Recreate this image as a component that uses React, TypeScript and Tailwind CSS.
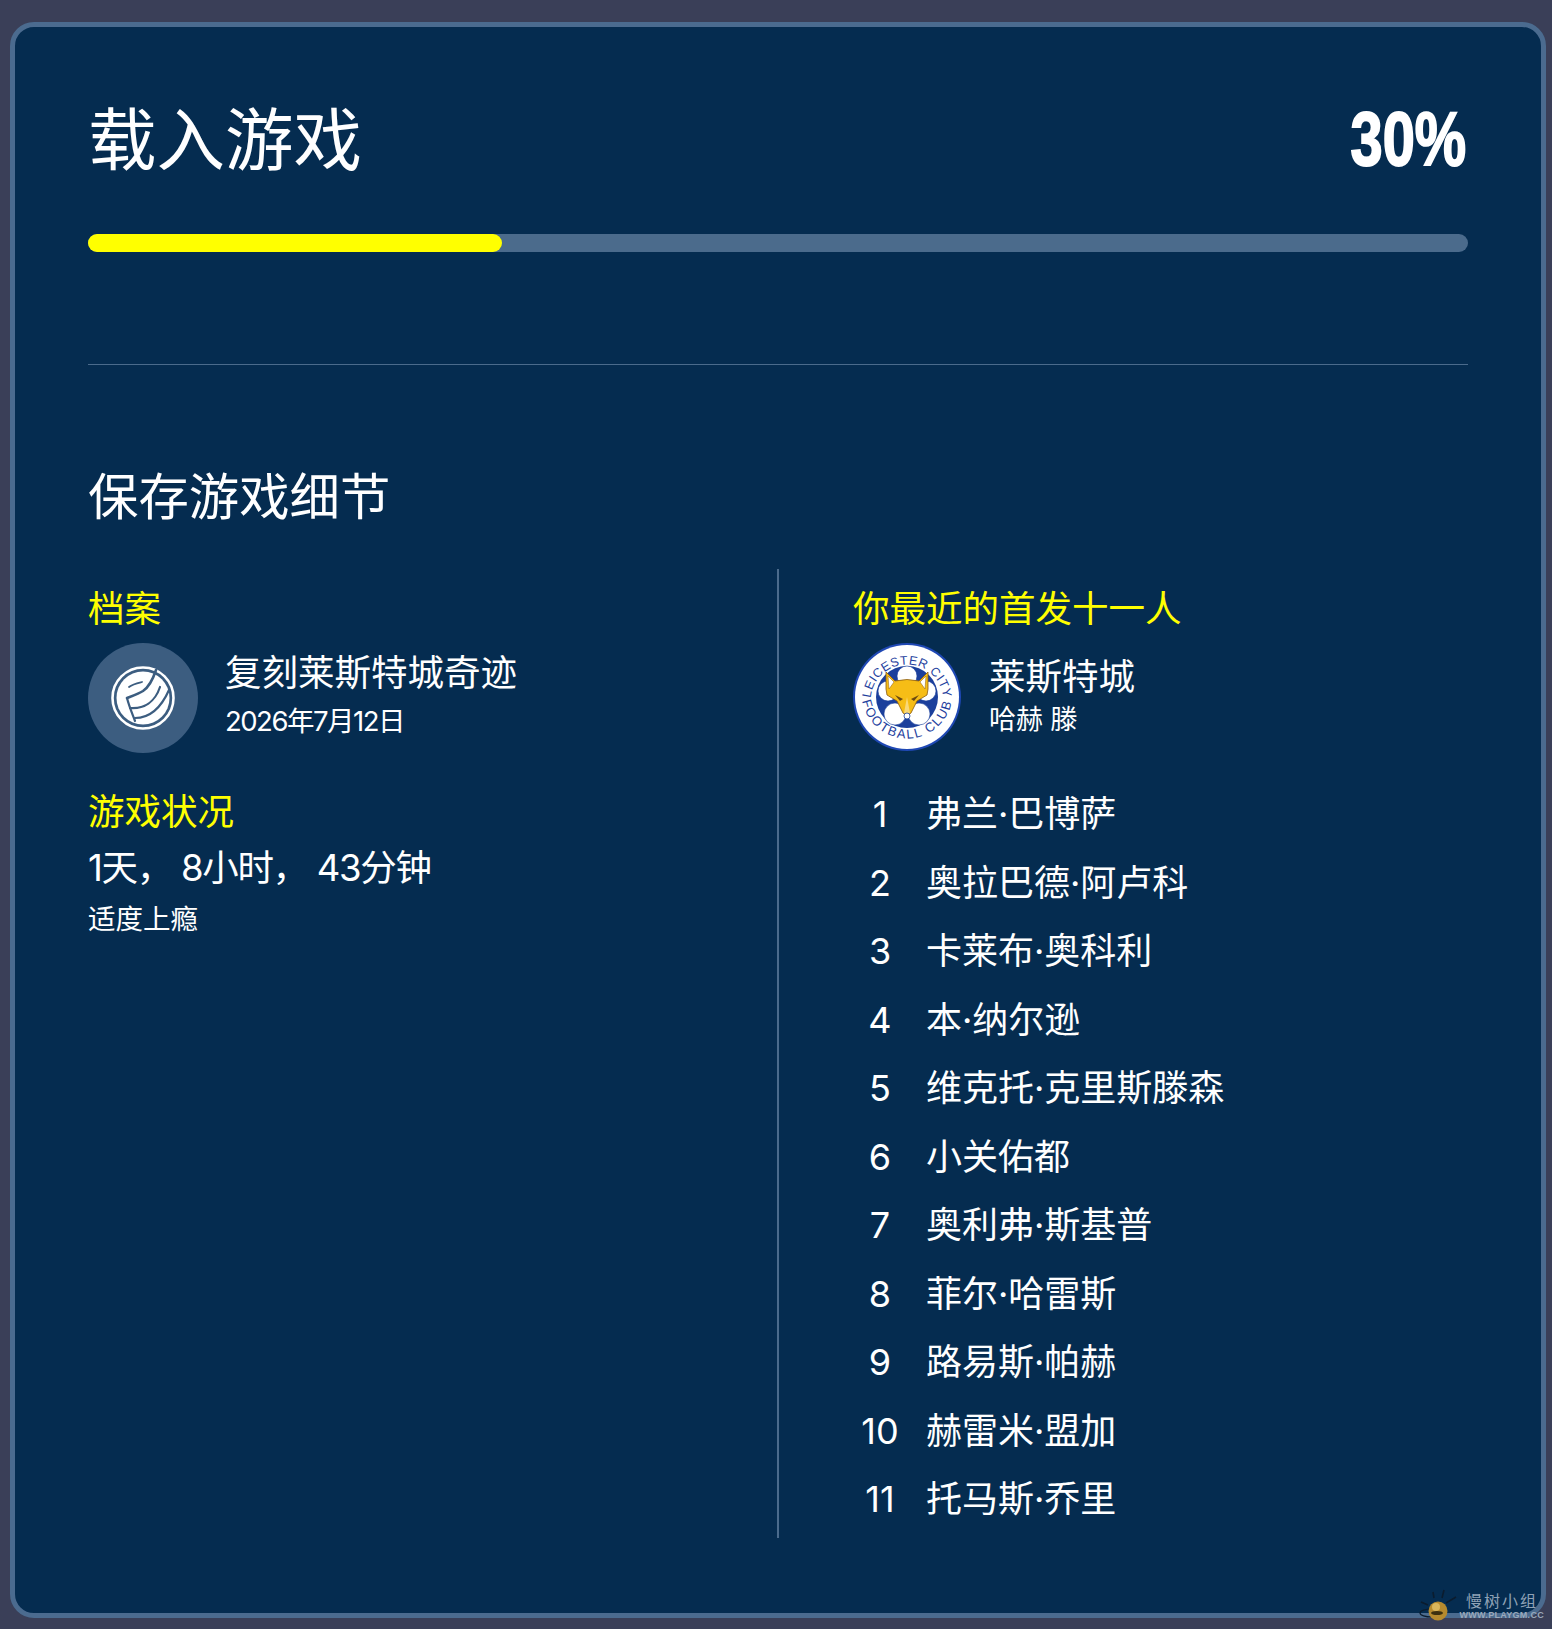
const squad = [
  "弗兰·巴博萨",
  "奥拉巴德·阿卢科",
  "卡莱布·奥科利",
  "本·纳尔逊",
  "维克托·克里斯滕森",
  "小关佑都",
  "奥利弗·斯基普",
  "菲尔·哈雷斯",
  "路易斯·帕赫",
  "赫雷米·盟加",
  "托马斯·乔里",
];

const ProfileIcon = () => (
  <svg viewBox="0 0 64 64" className="w-16 h-16">
    <circle cx="32" cy="32" r="30.5" fill="none" stroke="#fff" strokeWidth="2.6" />
    <circle cx="32" cy="32" r="26.5" fill="#fff" />
    <g fill="none" stroke="#3c5d80" strokeLinecap="round">
      <path d="M45 4C42 13 38 21 32 25C27 28 21 30 16 32" strokeWidth="2.6" />
      <path d="M16 32C18 40 21 47 24 55" strokeWidth="2.2" />
      <path d="M19 42C33 43 44 36 49 21" strokeWidth="2.2" />
      <path d="M24 52C38 52 50 42 58 24" strokeWidth="2.2" />
      <path d="M18 21C22 18 27 17 31 16" strokeWidth="1.8" />
    </g>
  </svg>
);

const ClubCrest = () => (
  <svg viewBox="0 0 108 108" className="w-[108px] h-[108px]">
    <defs>
      <path id="crestTop" d="M17.5 58A36.5 36.5 0 1 1 90.5 58" />
      <path id="crestBottom" d="M8.5 50A45.5 45.5 0 1 0 99.5 50" />
    </defs>
    <circle cx="54" cy="54" r="54" fill="#1f48b4" />
    <circle cx="54" cy="54" r="52" fill="#fff" />
    <text fontFamily="'Liberation Sans', sans-serif" fontSize="12.5" fill="#1f3f9e" letterSpacing="0.5">
      <textPath href="#crestTop" startOffset="50%" textAnchor="middle">LEICESTER CITY</textPath>
    </text>
    <text fontFamily="'Liberation Sans', sans-serif" fontSize="13" fill="#1f3f9e" letterSpacing="1.6">
      <textPath href="#crestBottom" startOffset="50%" textAnchor="middle">FOOTBALL CLUB</textPath>
    </text>
    <circle cx="54" cy="54" r="31" fill="#1b3f9c" />
    <g fill="#fff" stroke="#1b3f9c" strokeWidth="0.6">
      <circle cx="54" cy="33" r="10" />
      <circle cx="35" cy="48" r="10" />
      <circle cx="73" cy="48" r="10" />
      <circle cx="42" cy="71" r="11" />
      <circle cx="66" cy="71" r="11" />
    </g>
    <path
      d="M33 29L42 38Q54 35 66 38L75 29L75 46L74 52L64 58L58 70Q54 74 50 70L44 58L34 52L33 46Z"
      fill="#f6bd16"
      stroke="#8a5a10"
      strokeWidth="0.8"
    />
    <path d="M35 33L41 39L36 46Z" fill="#fff" stroke="#8a5a10" strokeWidth="0.5" />
    <path d="M73 33L67 39L72 46Z" fill="#fff" stroke="#8a5a10" strokeWidth="0.5" />
    <path d="M42 52L50 56L47 58ZM66 52L58 56L61 58Z" fill="#6b4a12" />
    <path d="M51 70L54 54L57 70Z" fill="#f9d878" />
    <circle cx="54" cy="73" r="3" fill="#fff" stroke="#1b3f9c" strokeWidth="0.8" />
  </svg>
);

const Watermark = () => (
  <div className="absolute right-0 bottom-0 w-[170px] h-[50px] pointer-events-none">
    <svg viewBox="0 0 40 40" className="absolute left-[36px] top-[6px] w-[40px] h-[40px]">
      <path d="M3 17L10 20M15 7L16 13M26 5L24 13M38 12L28 18" stroke="#0b1c2e" strokeWidth="1.6" />
      <ellipse cx="14" cy="28" rx="12" ry="4" fill="none" stroke="#0b1c2e" strokeWidth="1.2" />
      <circle cx="20" cy="26" r="9.5" fill="#b58a2e" />
      <circle cx="18" cy="22" r="4" fill="#d9b65c" />
      <ellipse cx="19" cy="28" rx="6" ry="2" fill="#3c3010" />
    </svg>
    <div className="absolute right-[14px] top-[12px] text-[16px] leading-[22px] tracking-[2px] text-[#8fa2b6] font-['Liberation_Serif','Noto_Sans_CJK_SC',serif]">
      慢树小组
    </div>
    <div className="absolute right-[8px] top-[31px] text-[9px] leading-[10px] font-bold tracking-[0.3px] text-[#9aa9bb] font-['Liberation_Sans',sans-serif]">
      WWW.PLAYGM.CC
    </div>
  </div>
);

const App = () => {
  return (
    <div className="relative w-[1552px] h-[1629px] overflow-hidden bg-[#3a3f58] pt-[22px] pl-[10px] font-['Inter','Noto_Sans_CJK_SC',sans-serif] text-white">
      <div className="w-[1536px] h-[1596px] rounded-[24px] border-[5px] border-[#4b6b8f] bg-[#052c50] px-[73px] pt-[73px]">
        <div className="flex h-[82px] items-center justify-between">
          <h1 className="text-[68.5px] leading-[82px] font-normal">载入游戏</h1>
          <span className="mr-[2px] mb-[4px] origin-right scale-x-[0.76] text-[76px] leading-[82px] font-bold font-['Liberation_Sans',sans-serif] [-webkit-text-stroke:2px_white]">
            30%
          </span>
        </div>

        <div className="mt-[52px] h-[18px] rounded-full bg-[#4b6b8c]">
          <div className="h-full w-[30%] rounded-full bg-[#ffff00]" />
        </div>

        <div className="mt-[112px] h-px bg-[#4b6b8c]" />

        <h2 className="mt-[102px] text-[50.4px] leading-[60px] font-normal">保存游戏细节</h2>

        <div className="mt-[42px] flex h-[969px]">
          {/* left column */}
          <div className="w-[691px] border-r-2 border-[#4b6b8c] pt-[15px]">
            <div className="text-[36.5px] leading-[50px] text-[#ffff00]">档案</div>
            <div className="mt-[9px] flex gap-[27px]">
              <div className="flex h-[110px] w-[110px] items-center justify-center rounded-full bg-[#3c5d80]">
                <ProfileIcon />
              </div>
              <div className="pt-[8px]">
                <div className="text-[36.5px] leading-[44px]">复刻莱斯特城奇迹</div>
                <div className="mt-[8px] text-[27.5px] leading-[36px] tracking-[-1.5px]">2026年7月12日</div>
              </div>
            </div>
            <div className="mt-[34px] text-[36.5px] leading-[50px] text-[#ffff00]">游戏状况</div>
            <div className="mt-[6px] text-[36.5px] leading-[50px] tracking-[-1.3px]">1天， 8小时， 43分钟</div>
            <div className="mt-[8px] text-[27.5px] leading-[36px]">适度上瘾</div>
          </div>

          {/* right column */}
          <div className="flex-1 pl-[74px] pt-[15px]">
            <div className="text-[36.5px] leading-[50px] text-[#ffff00]">你最近的首发十一人</div>
            <div className="mt-[9px] flex gap-[28px]">
              <ClubCrest />
              <div className="pt-[12px]">
                <div className="text-[36.5px] leading-[44px]">莱斯特城</div>
                <div className="mt-[3px] text-[27px] leading-[36px]">哈赫 滕</div>
              </div>
            </div>
            <div className="mt-[29px]">
              {squad.map((name, index) => (
                <div className="flex h-[68.5px] items-center gap-[19px] text-[36px]" key={index}>
                  <span className="w-[54px] text-center">{index + 1}</span>
                  <span>{name}</span>
                </div>
              ))}
            </div>
          </div>
        </div>
      </div>
      <Watermark />
    </div>
  );
};

export default App;
